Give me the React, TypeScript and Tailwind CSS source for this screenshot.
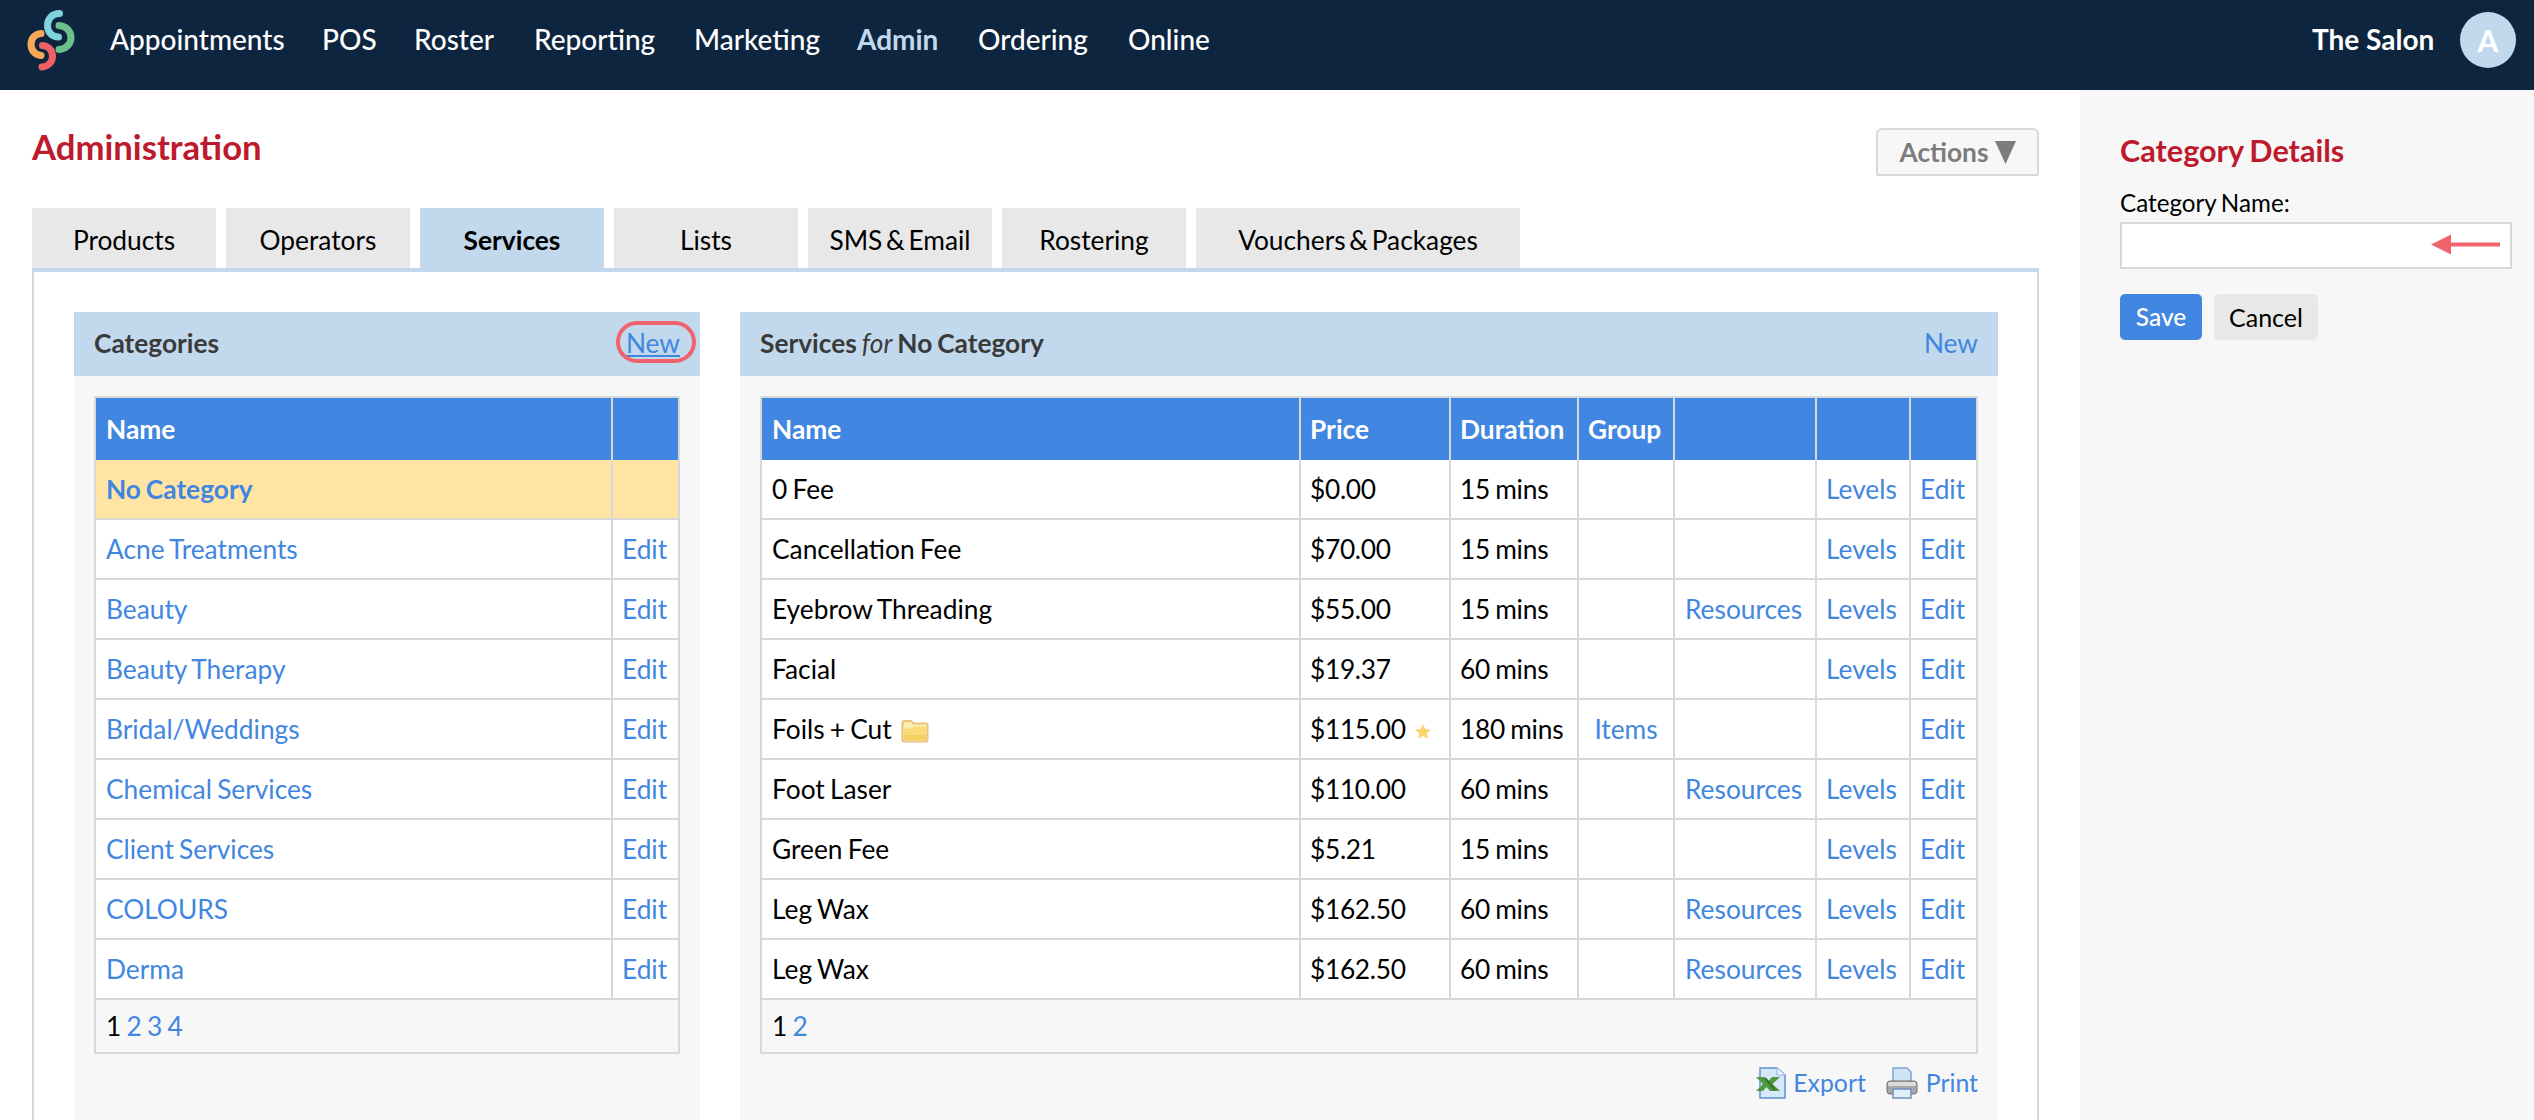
import React from "react";

const nav = ["Appointments", "POS", "Roster", "Reporting", "Marketing", "Admin", "Ordering", "Online"];
const navX = [110, 322, 414, 534, 694, 857, 978, 1128];
const tabs = [
  ["Products", "w-[184px]"],
  ["Operators", "w-[184px]"],
  ["Services", "w-[184px]"],
  ["Lists", "w-[184px]"],
  ["SMS & Email", "w-[184px]"],
  ["Rostering", "w-[184px]"],
  ["Vouchers & Packages", "w-[324px]"],
];
const cats = ["Acne Treatments", "Beauty", "Beauty Therapy", "Bridal/Weddings", "Chemical Services", "Client Services", "COLOURS", "Derma"];
const services: [string, string, string, string, boolean, boolean][] = [
  ["0 Fee", "$0.00", "15 mins", "", false, true],
  ["Cancellation Fee", "$70.00", "15 mins", "", false, true],
  ["Eyebrow Threading", "$55.00", "15 mins", "", true, true],
  ["Facial", "$19.37", "60 mins", "", false, true],
  ["Foils + Cut", "$115.00", "180 mins", "Items", false, false],
  ["Foot Laser", "$110.00", "60 mins", "", true, true],
  ["Green Fee", "$5.21", "15 mins", "", false, true],
  ["Leg Wax", "$162.50", "60 mins", "", true, true],
  ["Leg Wax", "$162.50", "60 mins", "", true, true],
];

const th = "h-[62px] bg-[#4186e0] text-white font-bold text-left pl-[9px] pr-[9px] pb-[1px] border-r-2 border-[#d8d8d8]";
const td = "h-[60px] pl-[9px] pr-[9px] pb-[1px] border-r-2 border-b-2 border-[#d8d8d8] bg-white align-middle whitespace-nowrap overflow-visible";
const link = "text-[#4186e0]";

function Logo() {
  return (
    <svg className="absolute left-0 top-0" width="90" height="90" viewBox="0 0 90 90" fill="none" strokeWidth="7" strokeLinecap="round">
      <path d="M59.5 13.5 C52 13.5 47.5 19 47.5 25.5 C47.5 32 52 37 58.5 37" stroke="#7fd3dc" />
      <path d="M59 25.5 C66 26 71 31 71 37.5 C71 44 66 49 59 49.5" stroke="#6cc08b" />
      <path d="M41 33.5 C34.500 34 31 39 31 44.500 C31 50 35 55 41 55.500" stroke="#f7a958" />
      <path d="M42.500 45.500 C49 46 52.500 51 52.500 56.500 C52.500 62 48 66.500 42 67" stroke="#ee5f66" />
    </svg>
  );
}

function Folder() {
  return (
    <svg className="inline-block ml-[9px] align-[-4px]" width="28" height="24" viewBox="0 0 28 24">
      <path d="M1.500 4 Q1.500 2 3.500 2 H10 L12.500 4.500 H25 Q26.500 4.500 26.500 6 V21 Q26.500 22.500 25 22.500 H3 Q1.500 22.500 1.500 21 Z" fill="#fbeeb5" stroke="#eec07e" strokeWidth="2" />
      <path d="M3 10 L11 9 L13 7.500 H25 V21 H3 Z" fill="#f7dc78" />
      <path d="M3 16 H25 V21 H3 Z" fill="#f4cf62" />
    </svg>
  );
}

function Star() {
  return (
    <svg className="inline-block ml-[8px] align-[-1px]" width="18" height="17" viewBox="0 0 24 24">
      <path d="M12 1.500 L15.300 8.500 L23 9.400 L17.300 14.600 L18.900 22.300 L12 18.400 L5.100 22.300 L6.700 14.600 L1 9.400 L8.700 8.500 Z" fill="#f8d56a" />
    </svg>
  );
}

function ExcelIcon() {
  return (
    <svg width="30" height="32" viewBox="0 0 30 32">
      <path d="M4 1 H21 L29 8 V31 H4 Z" fill="#d6e7f7" stroke="#5d92cf" strokeWidth="1.500" />
      <path d="M21 1 V8 H29" fill="#f2f8fd" stroke="#8fb5de" strokeWidth="1" />
      <path d="M0 10 H8 L12.500 14 L16 10 H24 L16.500 17 L24 24 H14 L10.500 20 L7 24 H0 L7 17 Z" fill="#4f9a3e" />
      <path d="M9 11 L19 23" stroke="#2f7427" strokeWidth="2" />
    </svg>
  );
}

function PrinterIcon() {
  return (
    <svg width="32" height="32" viewBox="0 0 32 32">
      <path d="M7 1 H21 L25 5 V16 H7 Z" fill="#cfe2f6" stroke="#7ca6d6" strokeWidth="1.500" />
      <rect x="1" y="14" width="30" height="13" rx="3" fill="#a8a8a8" stroke="#6f6f6f" strokeWidth="1" />
      <rect x="2" y="15" width="28" height="4" rx="1.500" fill="#dcdcdc" />
      <rect x="7" y="22" width="18" height="9" fill="#e2edf8" stroke="#6f93bd" strokeWidth="1.500" />
    </svg>
  );
}

export default function App() {
  return (
    <div className="relative w-[2534px] h-[1120px] overflow-hidden bg-white text-black text-[26.3px] leading-[32px] [word-spacing:-1.5px] [font-family:Lato,sans-serif]">
      <header className="relative h-[90px] bg-[#0e2540]">
        <Logo />
        {nav.map((n, i) => (
          <span
            key={n}
            style={{ left: navX[i] }}
            className={`absolute top-[21px] text-[28px] leading-[36px] ${n === "Admin" ? "text-[#c2d9ed] font-bold" : "text-white font-medium"}`}
          >
            {n}
          </span>
        ))}
        <span className="absolute left-[2312px] top-[21px] text-[28px] leading-[36px] font-bold text-white [word-spacing:0px]">The Salon</span>
        <div className="absolute left-[2460px] top-[12px] w-[56px] h-[56px] rounded-full bg-[#c2d9ed] flex items-center justify-center text-white font-bold text-[30px]">A</div>
      </header>

      <div className="flex h-[1030px]">
        <main className="relative w-[2080px]">
          <h1 className="absolute left-[32px] top-[37px] text-[34.700px] leading-[40px] font-bold text-[#bd1a2e]">Administration</h1>
          <button className="absolute left-[1876px] top-[38px] w-[163px] h-[48px] flex items-center justify-center gap-[6px] bg-[#f7f7f7] border-2 border-[#d8d8d8] rounded-t-[6px] rounded-b-[2px] text-[#7c7c7c] font-bold">
            Actions
            <svg width="21" height="23" viewBox="0 0 21 23"><path d="M0 0 H21 L10.500 23 Z" fill="#7c7c7c" /></svg>
          </button>

          <div className="absolute left-[32px] top-[118px] flex gap-[10px] [word-spacing:-3px]">
            {tabs.map(([t, w]) => (
              <div key={t} className={`${w} h-[60px] flex items-center justify-center pt-[3px] ${t === "Services" ? "bg-[#c2d9ed] font-bold" : "bg-[#e8e8e8]"}`}>
                {t}
              </div>
            ))}
          </div>

          <section className="absolute left-[32px] top-[178px] w-[2007px] h-[860px] border-x-2 border-[#d8d8d8] border-t-4 border-t-[#c2d9ed]">
            <div className="absolute left-[40px] top-[40px] w-[626px] h-[820px] bg-[#f7f7f7]">
              <div className="h-[64px] bg-[#c2d9ed] flex items-center justify-between px-[20px] pb-[2px] font-bold text-[#3a3a3a]">
                <span>Categories</span>
                <a className="relative underline text-[#4186e0] font-normal">
                  New
                  <span className="absolute left-[-10px] top-[-6px] w-[80px] h-[42px] rounded-full border-[4px] border-[#f0636c]" />
                </a>
              </div>
              <table className="table-fixed border-separate border-spacing-0 absolute left-[20px] top-[84px] w-[586px] border-l-2 border-t-2 border-[#d8d8d8]">
                <colgroup>
                  <col className="w-[517px]" />
                  <col className="w-[67px]" />
                </colgroup>
                <thead>
                  <tr>
                    <th className={`${th} !pl-[10px]`}>Name</th>
                    <th className={th}></th>
                  </tr>
                </thead>
                <tbody>
                  <tr>
                    <td className={`${td} !pl-[10px] !bg-[#ffe4a3] font-bold text-[#4186e0]`}>No Category</td>
                    <td className={`${td} !bg-[#ffe4a3]`}></td>
                  </tr>
                  {cats.map((c) => (
                    <tr key={c}>
                      <td className={`${td} !pl-[10px] ${link}`}>{c}</td>
                      <td className={`${td} ${link}`}>Edit</td>
                    </tr>
                  ))}
                  <tr>
                    <td colSpan={2} className="h-[54px] px-[10px] bg-[#f7f7f7] border-r-2 border-b-2 border-[#d8d8d8]">
                      1 <span className={link}>2 3 4</span>
                    </td>
                  </tr>
                </tbody>
              </table>
            </div>

            <div className="absolute left-[706px] top-[40px] w-[1258px] h-[820px] bg-[#f7f7f7]">
              <div className="h-[64px] bg-[#c2d9ed] flex items-center justify-between px-[20px] pb-[2px] font-bold text-[#3a3a3a]">
                <span>Services <i className="font-normal">for</i> No Category</span>
                <a className="text-[#4186e0] font-normal">New</a>
              </div>
              <table className="table-fixed border-separate border-spacing-0 absolute left-[20px] top-[84px] w-[1218px] border-l-2 border-t-2 border-[#d8d8d8]">
                <colgroup>
                  <col className="w-[539px]" />
                  <col className="w-[150px]" />
                  <col className="w-[128px]" />
                  <col className="w-[96px]" />
                  <col className="w-[142px]" />
                  <col className="w-[94px]" />
                  <col className="w-[67px]" />
                </colgroup>
                <thead>
                  <tr>
                    {["Name", "Price", "Duration", "Group", "", "", ""].map((h, i) => (
                      <th key={i} className={`${th} ${i === 0 ? "!pl-[10px]" : ""}`}>{h}</th>
                    ))}
                  </tr>
                </thead>
                <tbody>
                  {services.map((s, i) => (
                    <tr key={i}>
                      <td className={`${td} !pl-[10px]`}>{s[0]}{s[0] === "Foils + Cut" && <Folder />}</td>
                      <td className={`${td} tracking-[-0.3px]`}>{s[1]}{s[0] === "Foils + Cut" && <Star />}</td>
                      <td className={`${td} tracking-[-0.2px]`}>{s[2]}</td>
                      <td className={`${td} ${link} text-center`}>{s[3]}</td>
                      <td className={`${td} !pl-[10px] ${link}`}>{s[4] ? "Resources" : ""}</td>
                      <td className={`${td} ${link}`}>{s[5] ? "Levels" : ""}</td>
                      <td className={`${td} ${link}`}>Edit</td>
                    </tr>
                  ))}
                  <tr>
                    <td colSpan={7} className="h-[54px] px-[10px] bg-[#f7f7f7] border-r-2 border-b-2 border-[#d8d8d8]">
                      1 <span className={link}>2</span>
                    </td>
                  </tr>
                </tbody>
              </table>
              <div className="absolute right-[20px] top-[755px] flex items-center text-[24.800px] text-[#4186e0]">
                <ExcelIcon />
                <span className="ml-[7px] mr-[20px]">Export</span>
                <PrinterIcon />
                <span className="ml-[8px]">Print</span>
              </div>
            </div>
          </section>
        </main>

        <aside className="relative w-[454px] bg-[#f7f7f7]">
          <h2 className="absolute left-[40px] top-[43px] text-[30.600px] leading-[36px] font-bold text-[#bd1a2e]">Category Details</h2>
          <label className="absolute left-[40px] top-[98px] text-[24.200px] leading-[30px]">Category Name:</label>
          <div className="absolute left-[40px] top-[132px] w-[392px] h-[47px] bg-white border-2 border-[#d8d8d8]">
            <svg className="absolute left-[308px] top-[10px]" width="71" height="22" viewBox="0 0 71 22">
              <path d="M1 10.500 L21 0.500 V8.500 H70 V12.500 H21 V20.500 Z" fill="#f0636c" />
            </svg>
          </div>
          <button className="absolute left-[40px] top-[204px] w-[82px] h-[46px] rounded-[5px] bg-[#4186e0] text-white font-medium text-[24.500px]">Save</button>
          <button className="absolute left-[134px] top-[204px] w-[104px] h-[46px] rounded-[5px] bg-[#e8e8e8] text-black text-[25px]">Cancel</button>
        </aside>
      </div>
    </div>
  );
}
